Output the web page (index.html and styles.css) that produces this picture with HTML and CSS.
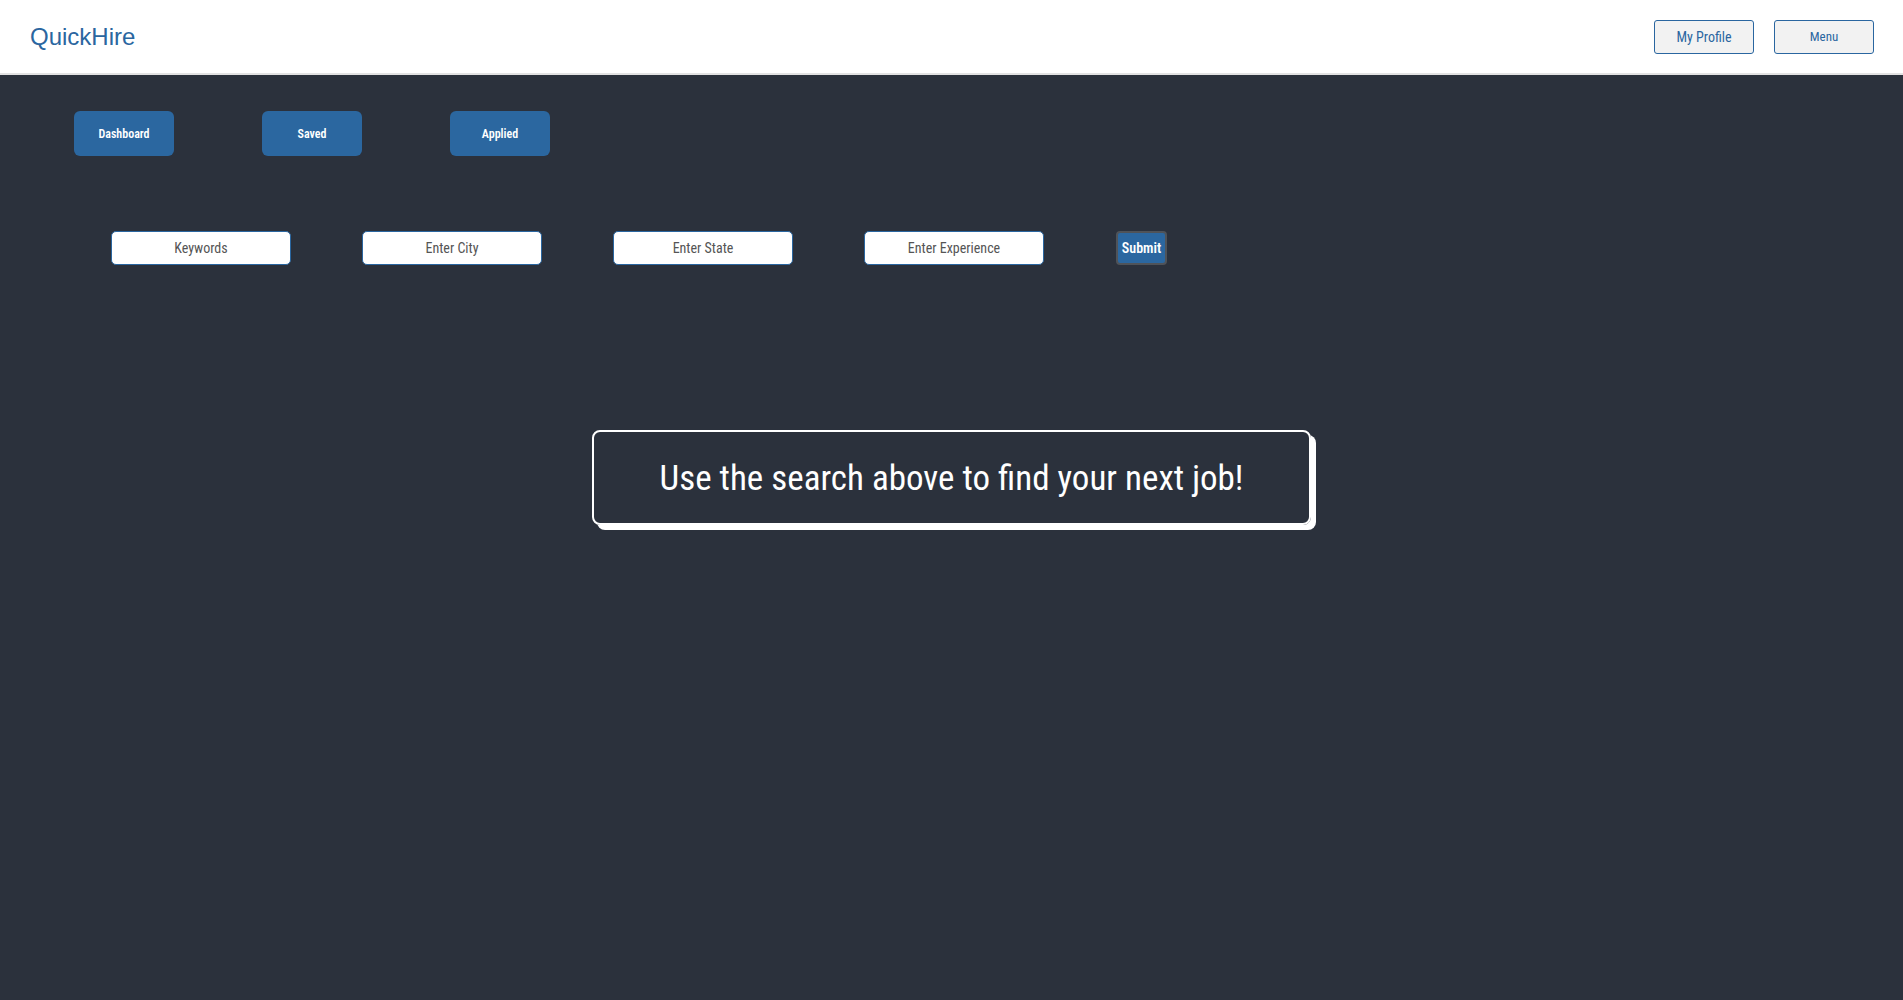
FILE: index.html
```html
<!DOCTYPE html>
<html lang="en">
<head>
<meta charset="utf-8">
<title>QuickHire</title>
<link rel="stylesheet" href="styles.css">
</head>
<body>
<header class="topbar">
  <div class="logo">QuickHire</div>
  <div class="top-actions">
    <button class="top-btn">My Profile</button>
    <button class="top-btn">Menu</button>
  </div>
</header>
<main class="page">
  <nav class="tabs">
    <button class="tab">Dashboard</button>
    <button class="tab">Saved</button>
    <button class="tab">Applied</button>
  </nav>
  <form class="search">
    <input class="field" type="text" placeholder="Keywords">
    <input class="field" type="text" placeholder="Enter City">
    <input class="field" type="text" placeholder="Enter State">
    <input class="field" type="text" placeholder="Enter Experience">
    <button class="submit" type="button">Submit</button>
  </form>
  <div class="message">Use the search above to find your next job!</div>
</main>
</body>
</html>
```

FILE: styles.css
```css
html, body {
  margin: 0;
  padding: 0;
  height: 100%;
}
body {
  background: #2b313c;
  font-family: "Roboto Condensed", Roboto, "Liberation Sans", sans-serif;
  font-stretch: 75%;
}
.topbar {
  box-sizing: border-box;
  height: 75px;
  background: #ffffff;
  border-bottom: 2px solid #e2e2e2;
  display: flex;
  align-items: center;
  justify-content: space-between;
  padding: 0 29px 0 30px;
}
.logo {
  font-family: "Liberation Sans", Arial, sans-serif;
  font-stretch: normal;
  font-size: 24px;
  color: #2a66a0;
  margin-top: 1px;
}
.top-actions {
  display: flex;
  gap: 20px;
}
.top-btn {
  box-sizing: border-box;
  width: 100px;
  height: 34px;
  background: #f2f2f2;
  border: 1px solid #2a66a0;
  border-radius: 3px;
  color: #2a66a0;
  font-family: inherit;
  font-stretch: 75%;
  font-size: 14px;
  padding: 0;
}
.top-btn + .top-btn {
  font-size: 13px;
}
.page {
  display: flex;
  flex-direction: column;
}
.tabs {
  display: flex;
  gap: 88px;
  padding: 36px 0 0 74px;
}
.tab {
  box-sizing: border-box;
  width: 100px;
  height: 45px;
  background: #2b67a0;
  border: none;
  border-radius: 6px;
  color: #ffffff;
  font-family: inherit;
  font-stretch: 75%;
  font-weight: 600;
  font-size: 12px;
  padding: 0;
}
.search {
  display: flex;
  align-items: center;
  gap: 71px;
  margin: 75px 0 0 0;
  padding-left: 111px;
}
.field {
  box-sizing: border-box;
  width: 180px;
  height: 34px;
  background: #ffffff;
  border: 1px solid #2a66a0;
  border-radius: 5px;
  text-align: center;
  font-family: inherit;
  font-stretch: 75%;
  font-size: 14px;
  color: #333;
  padding: 0;
}
.field::placeholder {
  color: #555555;
}
.submit {
  box-sizing: border-box;
  width: 51px;
  height: 34px;
  margin-left: 1px;
  background: #2b67a0;
  border: 2px solid #4f5359;
  border-radius: 4px;
  color: #ffffff;
  font-family: inherit;
  font-stretch: 75%;
  font-weight: 600;
  font-size: 14px;
  padding: 0;
}
.message {
  box-sizing: border-box;
  align-self: center;
  width: 719px;
  height: 95px;
  margin-top: 165px;
  padding-top: 2px;
  border: 2px solid #ffffff;
  border-radius: 8px;
  box-shadow: 5px 5px 0 #ffffff;
  color: #ffffff;
  font-size: 35px;
  font-weight: 400;
  display: flex;
  align-items: center;
  justify-content: center;
}
```
